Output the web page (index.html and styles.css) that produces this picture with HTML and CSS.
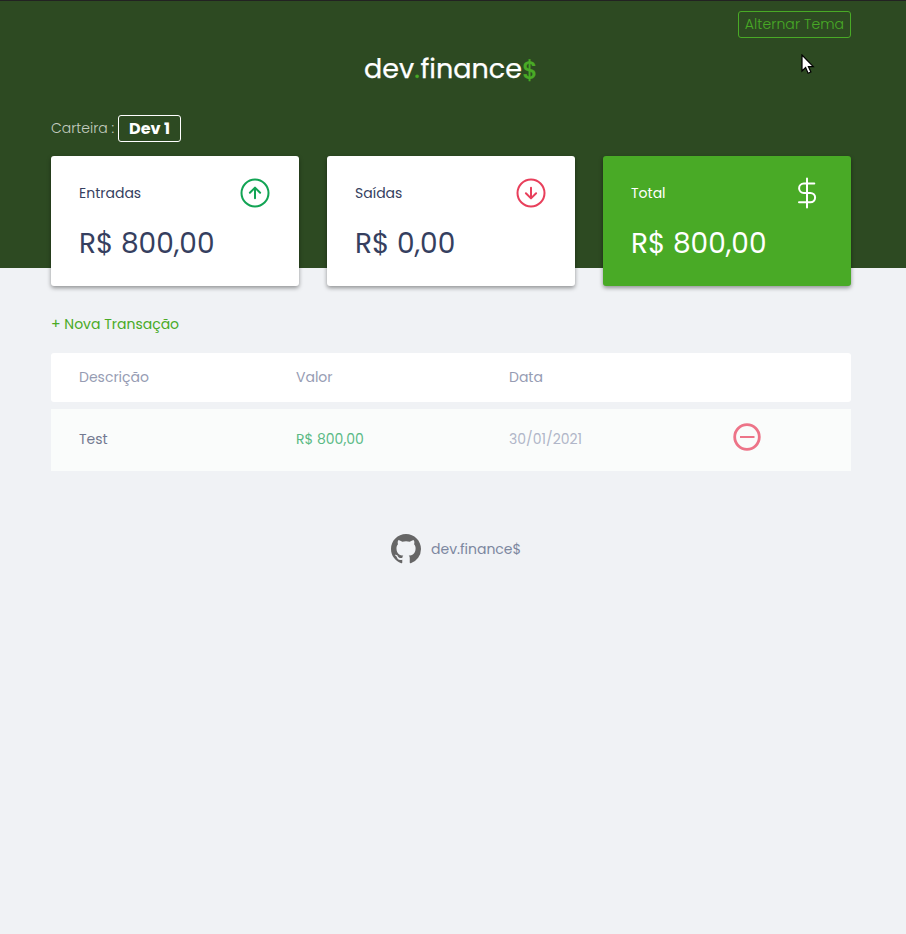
FILE: index.html
```html
<!DOCTYPE html>
<html lang="pt-BR">
<head>
<meta charset="utf-8">
<title>dev.finance$</title>
<link rel="stylesheet" href="styles.css">
</head>
<body>
<header class="header">
  <div class="container">
    <div class="toolbar"><button class="theme"><span>Alternar Tema</span></button></div>
    <h1 class="logo"><span>dev</span><span class="dot">.</span><span>finance</span><span class="dollar">$</span></h1>
    <div class="wallet"><span class="wallet-label">Carteira :</span><button class="wallet-name"><span>Dev 1</span></button></div>
  </div>
</header>
<main class="container">
  <section class="cards">
    <article class="card">
      <div class="card-head"><span>Entradas</span>
        <svg width="32" height="32" viewBox="0 0 32 32" fill="none" stroke="#12a454" stroke-width="2" stroke-linecap="round" stroke-linejoin="round"><circle cx="16" cy="16" r="13.5"/><path d="M16 21.3V11M10.9 15.7 16 10.6l5.1 5.1"/></svg>
      </div>
      <p class="amount">R$ 800,00</p>
    </article>
    <article class="card">
      <div class="card-head"><span>Saídas</span>
        <svg width="32" height="32" viewBox="0 0 32 32" fill="none" stroke="#e83f5b" stroke-width="2" stroke-linecap="round" stroke-linejoin="round"><circle cx="16" cy="16" r="13.5"/><path d="M16 10.7V21M10.9 16.3l5.1 5.1 5.1-5.1"/></svg>
      </div>
      <p class="amount">R$ 0,00</p>
    </article>
    <article class="card total">
      <div class="card-head"><span>Total</span>
        <svg width="32" height="32" viewBox="0 0 32 32" fill="none" stroke="#fff" stroke-width="2" stroke-linecap="round"><path d="M16 1.5v29M23.3 6.5h-10.5a4.7 4.7 0 0 0 0 9.4h6.6a4.7 4.7 0 0 1 0 9.4H8"/></svg>
      </div>
      <p class="amount">R$ 800,00</p>
    </article>
  </section>
  <a class="new">+ Nova Transação</a>
  <section class="table">
    <div class="row head"><span>Descrição</span><span>Valor</span><span>Data</span><span></span></div>
    <div class="row item"><span class="desc">Test</span><span class="income">R$ 800,00</span><span class="date">30/01/2021</span>
      <svg class="remove" width="28" height="28" viewBox="0 0 28 28" fill="none" stroke="#ed7488"><circle cx="14" cy="14" r="12.3" stroke-width="2.8"/><path d="M7 14h14.5" stroke-width="2"/></svg>
    </div>
  </section>
</main>
<footer class="footer">
  <svg width="30" height="30" viewBox="0 0 16 16" fill="#666"><path fill-rule="evenodd" d="M8 0C3.58 0 0 3.58 0 8c0 3.54 2.29 6.53 5.47 7.59.4.07.55-.17.55-.38 0-.19-.01-.82-.01-1.49-2.01.37-2.53-.49-2.69-.94-.09-.23-.48-.94-.82-1.13-.28-.15-.68-.52-.01-.53.63-.01 1.08.58 1.23.82.72 1.21 1.87.87 2.33.66.07-.52.28-.87.51-1.07-1.78-.2-3.64-.89-3.64-3.95 0-.87.31-1.59.82-2.15-.08-.2-.36-1.02.08-2.12 0 0 .67-.21 2.2.82.64-.18 1.32-.27 2-.27s1.36.09 2 .27c1.53-1.04 2.2-.82 2.2-.82.44 1.1.16 1.92.08 2.12.51.56.82 1.27.82 2.15 0 3.07-1.87 3.75-3.65 3.95.29.25.54.73.54 1.48 0 1.07-.01 1.93-.01 2.2 0 .21.15.46.55.38A8.01 8.01 0 0 0 16 8c0-4.42-3.58-8-8-8Z"/></svg>
  <span>dev.finance$</span>
</footer>
<svg class="cursor" width="14" height="21" viewBox="0 0 14 21"><path d="M1 1v16l3.6-3.4 2.5 5.6 2.8-1.2-2.5-5.4h4.9Z" fill="#fff" stroke="#000" stroke-width="1.2"/></svg>
</body>
</html>
```
FILE: styles.css
```css
* { box-sizing: border-box; margin: 0; padding: 0; }
body { position: relative; min-height: 934px; background: #f0f2f5; font: 400 14px/21px Poppins, Inter, sans-serif; color: #363f5f; }
span { white-space: nowrap; }
button { font: inherit; background: none; border-radius: 3px; }
.container { width: 800px; margin-left: 51px; }
.header { height: 268px; background: #2d4a22; border-top: 1px solid #222; }
.toolbar { display: flex; justify-content: flex-end; padding-top: 10px; }
.theme { width: 113px; height: 27px; border: 1px solid #49aa26; color: #49aa26; font-weight: 300; line-height: 23px; letter-spacing: .1px; }
.logo { display: flex; justify-content: center; height: 42px; margin-top: 10px; font-size: 27px; line-height: 41px; font-weight: 400; -webkit-text-stroke: .25px; color: #fff; }
.dot, .dollar { color: #49aa26; }
.dot { margin-right: .6px; }
.dollar { margin-left: .4px; font-size: 24px; font-weight: 500; line-height: 46px; }
.wallet { display: flex; align-items: center; gap: 4px; margin-top: 24px; height: 28px; color: #fff; }
.wallet-label { width: 63px; font-weight: 300; color: #c4cdc0; }
.wallet-name { width: 63px; height: 27px; border: 1px solid #fff; color: #fff; font-size: 16px; font-weight: 700; line-height: 26px; }
.cards { display: grid; grid-template-columns: repeat(3, 248px); gap: 28px; margin-top: -112px; }
.card { height: 130px; padding: 21px 28px; background: #fff; border-radius: 3px; box-shadow: 0 2px 4px rgba(0, 0, 0, .4); }
.card-head { display: flex; justify-content: space-between; align-items: center; height: 32px; }
.amount { margin-top: 14px; font-size: 28px; line-height: 42px; white-space: nowrap; }
.total { background: #49aa26; color: #fff; }
.new { display: block; margin-top: 28px; color: #49aa26; }
.table { display: grid; gap: 7px; margin-top: 18px; }
.row { display: grid; grid-template-columns: 217px 213px 224px 1fr; align-items: center; padding-left: 28px; background: #fff; }
.head { height: 49px; border-radius: 3px; color: #969cb3; }
.item { height: 62px; padding-bottom: 2px; background: #fafcfb; }
.desc { color: #727990; }
.income { color: #59b984; }
.date { color: #b0b6c8; }
.remove { margin-top: -5px; }
.footer { display: flex; align-items: center; gap: 10px; margin: 62px 0 0 391px; height: 32px; color: #7c879f; }
.cursor { position: absolute; left: 801px; top: 54px; }
```
